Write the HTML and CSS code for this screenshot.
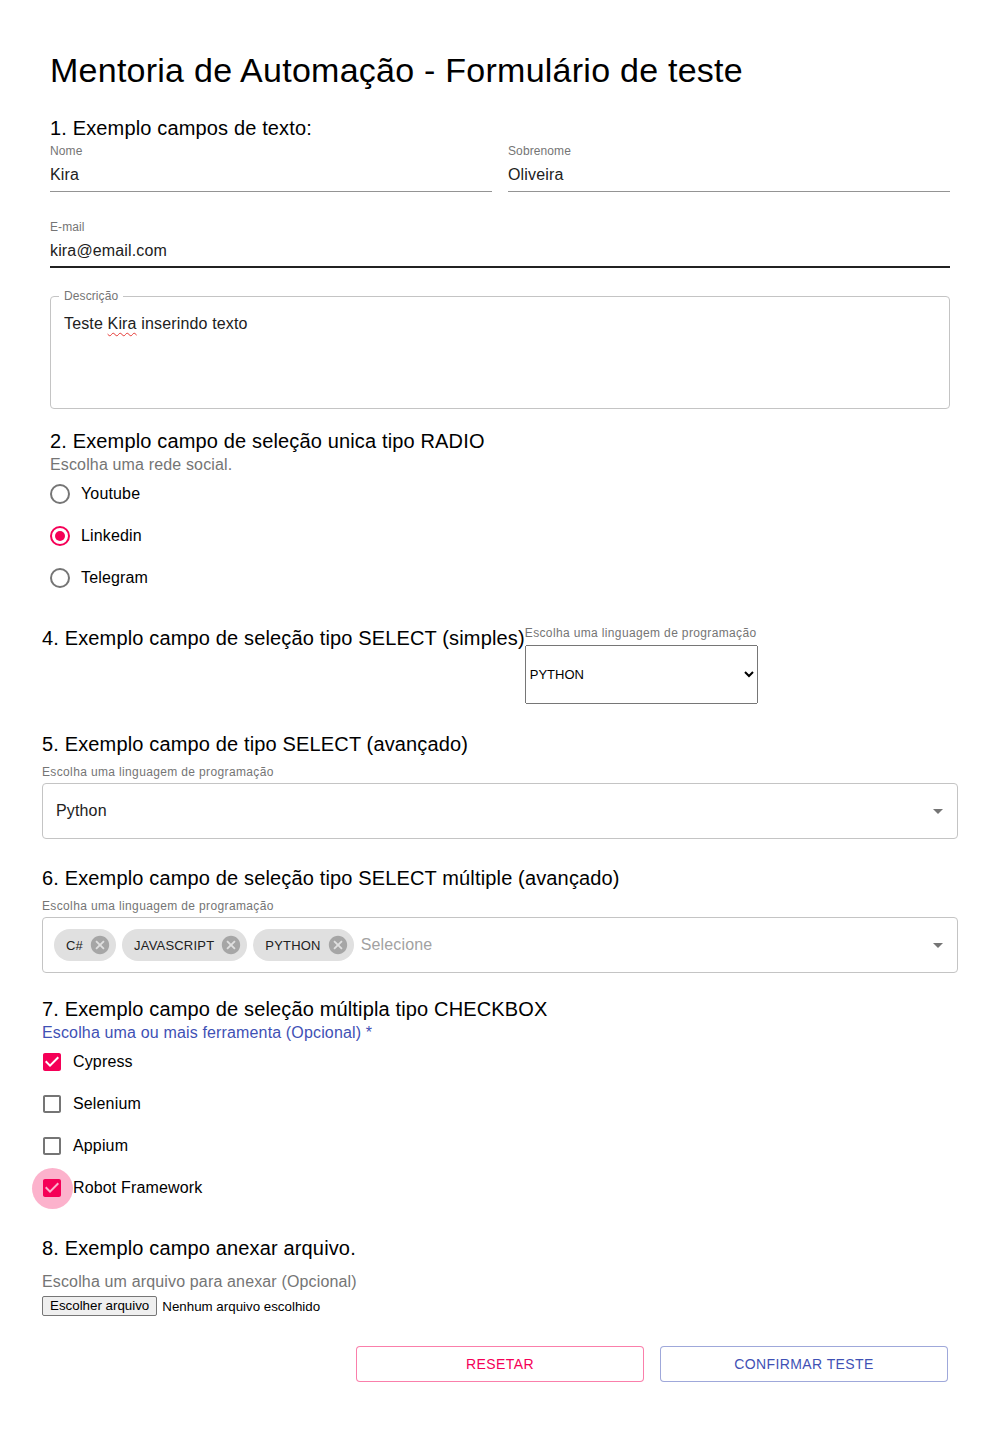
FILE: index.html
```html
<!DOCTYPE html>
<html lang="pt-BR">
<head>
<meta charset="utf-8">
<title>Mentoria de Automação - Formulário de teste</title>
<link rel="stylesheet" href="styles.css">
</head>
<body>
<div class="page">
  <h1 class="title">Mentoria de Automação - Formulário de teste</h1>

  <section class="inset s1">
    <h2 class="h6">1. Exemplo campos de texto:</h2>
    <div class="name-row">
      <div class="field">
        <div class="field-label">Nome</div>
        <div class="field-input">Kira</div>
      </div>
      <div class="field">
        <div class="field-label">Sobrenome</div>
        <div class="field-input">Oliveira</div>
      </div>
    </div>
    <div class="field field-email">
      <div class="field-label">E-mail</div>
      <div class="field-input hover">kira@email.com</div>
    </div>
    <fieldset class="desc">
      <legend>Descrição</legend>
      <div class="desc-text">Teste <span class="misspell">Kira</span> inserindo texto</div>
    </fieldset>
  </section>

  <section class="inset s2">
    <h2 class="h6">2. Exemplo campo de seleção unica tipo RADIO</h2>
    <div class="form-label">Escolha uma rede social.</div>
    <div class="radio-group">
      <div class="radio-row"><span class="radio"></span><span>Youtube</span></div>
      <div class="radio-row"><span class="radio checked"></span><span>Linkedin</span></div>
      <div class="radio-row"><span class="radio"></span><span>Telegram</span></div>
    </div>
  </section>

  <section class="s4">
    <h2 class="h6">4. Exemplo campo de seleção tipo SELECT (simples)</h2>
    <div class="native-col">
      <div class="small-label long">Escolha uma linguagem de programação</div>
      <select class="native-select"><option>PYTHON</option></select>
    </div>
  </section>

  <section class="s5">
    <h2 class="h6">5. Exemplo campo de tipo SELECT (avançado)</h2>
    <div class="small-label long sel-label">Escolha uma linguagem de programação</div>
    <div class="mui-select">
      <span class="value">Python</span>
      <svg class="caret" viewBox="0 0 24 24"><path d="M7 10l5 5 5-5z"/></svg>
    </div>
  </section>

  <section class="s6">
    <h2 class="h6">6. Exemplo campo de seleção tipo SELECT múltiple (avançado)</h2>
    <div class="small-label long sel-label">Escolha uma linguagem de programação</div>
    <div class="mui-select multi">
      <div class="chips">
        <span class="chip">C#<svg viewBox="0 0 24 24"><path d="M12 2C6.47 2 2 6.47 2 12s4.47 10 10 10 10-4.47 10-10S17.53 2 12 2zm5 13.59L15.59 17 12 13.41 8.41 17 7 15.59 10.59 12 7 8.41 8.41 7 12 10.59 15.59 7 17 8.41 13.41 12 17 15.59z"/></svg></span>
        <span class="chip">JAVASCRIPT<svg viewBox="0 0 24 24"><path d="M12 2C6.47 2 2 6.47 2 12s4.47 10 10 10 10-4.47 10-10S17.53 2 12 2zm5 13.59L15.59 17 12 13.41 8.41 17 7 15.59 10.59 12 7 8.41 8.41 7 12 10.59 15.59 7 17 8.41 13.41 12 17 15.59z"/></svg></span>
        <span class="chip">PYTHON<svg viewBox="0 0 24 24"><path d="M12 2C6.47 2 2 6.47 2 12s4.47 10 10 10 10-4.47 10-10S17.53 2 12 2zm5 13.59L15.59 17 12 13.41 8.41 17 7 15.59 10.59 12 7 8.41 8.41 7 12 10.59 15.59 7 17 8.41 13.41 12 17 15.59z"/></svg></span>
        <span class="placeholder">Selecione</span>
      </div>
      <svg class="caret" viewBox="0 0 24 24"><path d="M7 10l5 5 5-5z"/></svg>
    </div>
  </section>

  <section class="s7">
    <h2 class="h6">7. Exemplo campo de seleção múltipla tipo CHECKBOX</h2>
    <div class="form-label primary">Escolha uma ou mais ferramenta (Opcional)<span class="req"> *</span></div>
    <div class="cb-group">
      <div class="cb-row">
        <span class="cb"><svg viewBox="3 3 18 18"><path class="on" d="M19 3H5c-1.11 0-2 .9-2 2v14c0 1.1.89 2 2 2h14c1.11 0 2-.9 2-2V5c0-1.1-.89-2-2-2zm-9 14l-5-5 1.41-1.41L10 14.17l7.59-7.59L19 8l-9 9z"/></svg></span>
        <span>Cypress</span>
      </div>
      <div class="cb-row">
        <span class="cb"><svg viewBox="3 3 18 18"><path class="off" d="M19 5v14H5V5h14m0-2H5c-1.1 0-2 .9-2 2v14c0 1.1.9 2 2 2h14c1.1 0 2-.9 2-2V5c0-1.1-.9-2-2-2z"/></svg></span>
        <span>Selenium</span>
      </div>
      <div class="cb-row">
        <span class="cb"><svg viewBox="3 3 18 18"><path class="off" d="M19 5v14H5V5h14m0-2H5c-1.1 0-2 .9-2 2v14c0 1.1.9 2 2 2h14c1.1 0 2-.9 2-2V5c0-1.1-.9-2-2-2z"/></svg></span>
        <span>Appium</span>
      </div>
      <div class="cb-row">
        <span class="cb"><svg viewBox="3 3 18 18"><path class="on" d="M19 3H5c-1.11 0-2 .9-2 2v14c0 1.1.89 2 2 2h14c1.11 0 2-.9 2-2V5c0-1.1-.89-2-2-2zm-9 14l-5-5 1.41-1.41L10 14.17l7.59-7.59L19 8l-9 9z"/></svg><span class="ripple"></span></span>
        <span>Robot Framework</span>
      </div>
    </div>
  </section>

  <section class="s8">
    <h2 class="h6">8. Exemplo campo anexar arquivo.</h2>
    <div class="form-label file-label">Escolha um arquivo para anexar (Opcional)</div>
    <div class="file-row">
      <button class="file-btn" type="button">Escolher arquivo</button>
      <span>Nenhum arquivo escolhido</span>
    </div>
  </section>

  <div class="actions">
    <button class="btn btn-reset" type="button">Resetar</button>
    <button class="btn btn-confirm" type="button">Confirmar teste</button>
  </div>
</div>
</body>
</html>
```

FILE: styles.css
```css
body {
  margin: 0;
  font-family: "Liberation Sans", Arial, sans-serif;
  color: #212121;
  background: #fff;
}

.page {
  padding: 49px 42px 40px;
}

.title {
  margin: 0;
  padding: 0 8px;
  font-size: 34px;
  line-height: 42px;
  font-weight: 400;
  letter-spacing: 0.25px;
  color: #000;
}

.h6 {
  margin: 0;
  font-size: 20px;
  line-height: 32px;
  font-weight: 400;
  letter-spacing: 0.15px;
  color: #000;
}

.inset {
  padding: 0 8px;
}

.s1 { margin-top: 21px; }

.name-row {
  display: grid;
  grid-template-columns: 1fr 1fr;
  gap: 16px;
}

.field-label {
  margin-top: 1px;
  font-size: 12px;
  line-height: 12px;
  letter-spacing: 0.1px;
  color: #757575;
}

.field-input {
  font-size: 16px;
  line-height: 20px;
  letter-spacing: 0.15px;
  padding: 8px 0 6px;
  border-bottom: 1px solid #949494;
  color: #212121;
}

.field-email { margin-top: 29px; }

.field-input.hover {
  border-bottom: 2px solid #212121;
  padding-bottom: 5px;
}

.desc {
  margin: 21px 0 0;
  padding: 0 13px;
  border: 1px solid #c4c4c4;
  border-radius: 4px;
  min-width: 0;
}

.desc legend {
  font-size: 12px;
  line-height: 14px;
  letter-spacing: 0.1px;
  padding: 0 5px;
  margin-left: -5px;
  color: #757575;
}

.desc-text {
  font-size: 16px;
  line-height: 20px;
  letter-spacing: 0.15px;
  padding: 11px 0 74px;
  color: #212121;
}

.misspell {
  text-decoration: underline wavy #e53935;
  text-decoration-thickness: 1px;
  text-underline-offset: 3px;
  text-decoration-skip-ink: none;
}

.s2 { margin-top: 16px; }

.form-label {
  font-size: 16px;
  line-height: 16px;
  letter-spacing: 0.15px;
  color: #757575;
}

.form-label.primary { color: #3f51b5; }

.radio-group {
  display: flex;
  flex-direction: column;
}

.radio-row {
  height: 42px;
  display: flex;
  align-items: center;
  gap: 11px;
  font-size: 16px;
  letter-spacing: 0.15px;
  color: #000;
}

.radio {
  width: 20px;
  height: 20px;
  box-sizing: border-box;
  border: 2px solid #757575;
  border-radius: 50%;
  display: flex;
  align-items: center;
  justify-content: center;
}

.radio.checked { border-color: #f50057; }

.radio.checked::after {
  content: "";
  width: 10px;
  height: 10px;
  border-radius: 50%;
  background: #f50057;
}

.s4 {
  margin-top: 23px;
  display: flex;
  align-items: flex-start;
}

.native-col {
  padding-top: 5px;
  display: flex;
  flex-direction: column;
  gap: 6px;
}

.small-label {
  font-size: 12px;
  line-height: 12px;
  color: #757575;
}

.small-label.long {
  letter-spacing: 0.36px;
}

.native-select {
  width: 233px;
  height: 59px;
  margin: 0;
  font-family: "Liberation Sans", Arial, sans-serif;
  font-size: 13px;
  color: #000;
}

.s5 { margin-top: 24px; }
.s6 { margin-top: 23px; }

.sel-label { margin-top: 6px; }

.mui-select {
  margin-top: 5px;
  height: 56px;
  box-sizing: border-box;
  border: 1px solid #c4c4c4;
  border-radius: 4px;
  display: flex;
  align-items: center;
  padding: 0 7px 0 13px;
}

.mui-select .value {
  flex: 1;
  font-size: 16px;
  line-height: 20px;
  letter-spacing: 0.15px;
  color: #212121;
}

.caret {
  width: 24px;
  height: 24px;
  fill: #757575;
  flex: none;
}

.mui-select.multi { padding-left: 11px; }

.chips {
  flex: 1;
  display: flex;
  align-items: center;
  gap: 6px;
}

.chip {
  height: 32px;
  border-radius: 16px;
  background: #e0e0e0;
  display: inline-flex;
  align-items: center;
  padding-left: 12px;
  font-size: 13px;
  letter-spacing: 0.2px;
  color: #212121;
}

.chip svg {
  width: 22px;
  height: 22px;
  margin: 0 5px 0 6px;
  fill: #a6a6a6;
}

.placeholder {
  margin-left: 1px;
  font-size: 16px;
  letter-spacing: 0.15px;
  color: #a2a2a2;
}

.s7 { margin-top: 20px; }

.req { color: #3f51b5; }

.cb-group {
  display: flex;
  flex-direction: column;
}

.cb-row {
  height: 42px;
  display: flex;
  align-items: center;
  gap: 12px;
  font-size: 16px;
  letter-spacing: 0.15px;
  color: #000;
}

.cb {
  position: relative;
  width: 18px;
  height: 18px;
  margin-left: 1px;
}

.cb svg {
  display: block;
  width: 18px;
  height: 18px;
}

.cb .on { fill: #f50057; }
.cb .off { fill: #757575; }

.ripple {
  position: absolute;
  left: -11px;
  top: -11px;
  width: 41px;
  height: 41px;
  border-radius: 50%;
  background: rgba(245, 0, 87, 0.3);
  pointer-events: none;
}

.s8 { margin-top: 23px; }

.file-label { margin-top: 10px; }

.file-row {
  margin-top: 6px;
  display: flex;
  align-items: center;
  gap: 5px;
  font-size: 13.33px;
  color: #000;
}

.file-btn {
  height: 20px;
  box-sizing: border-box;
  padding: 0 7px;
  margin: 0;
  font-family: "Liberation Sans", Arial, sans-serif;
  font-size: 13.33px;
  line-height: 16px;
  color: #000;
  background: #efefef;
  border: 1px solid #767676;
  border-radius: 2px;
}

.actions {
  margin-top: 30px;
  padding-right: 10px;
  display: flex;
  justify-content: flex-end;
  gap: 16px;
}

.btn {
  width: 288px;
  height: 36px;
  box-sizing: border-box;
  border-radius: 4px;
  background: #fff;
  font-family: "Liberation Sans", Arial, sans-serif;
  font-size: 14px;
  letter-spacing: 0.4px;
  text-transform: uppercase;
}

.btn-reset {
  border: 1px solid rgba(245, 0, 87, 0.5);
  color: #f50057;
}

.btn-confirm {
  border: 1px solid rgba(63, 81, 181, 0.5);
  color: #3f51b5;
}
```
